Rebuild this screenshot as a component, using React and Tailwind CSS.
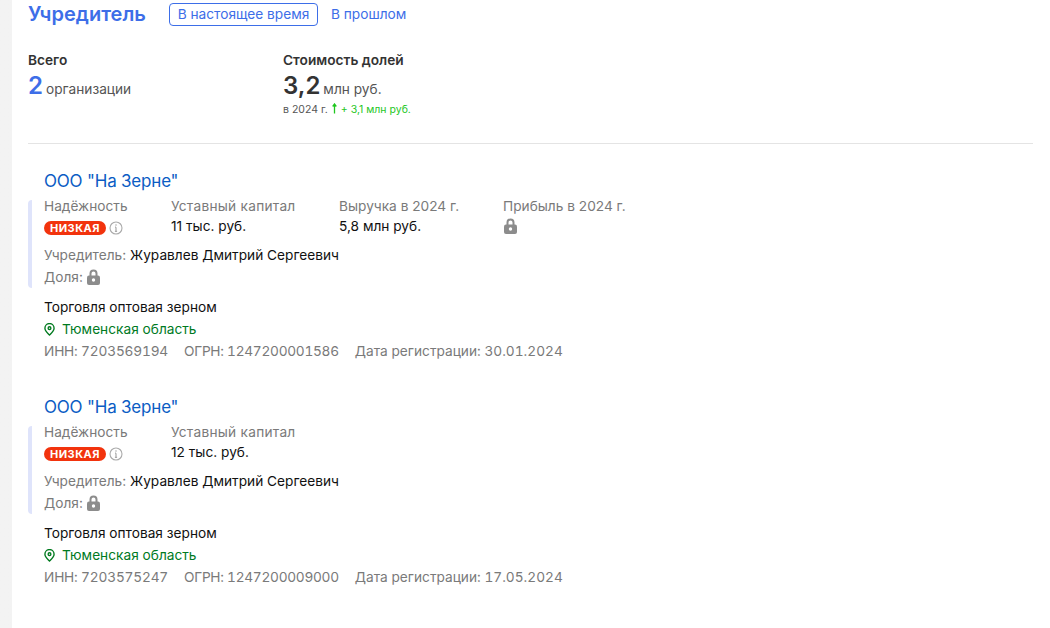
import React from "react";

const Lock = () => (
  <svg width="13" height="16" viewBox="0 0 13 16">
    <path d="M3.500 7V4.500a3 3 0 0 1 6 0V7" fill="none" stroke="#8c8c8c" strokeWidth="2" />
    <rect x="0" y="6.500" width="13" height="9.500" rx="2" fill="#8c8c8c" />
    <circle cx="6.500" cy="11" r="1.700" fill="#fff" />
  </svg>
);

const Info = () => (
  <svg width="14" height="14" viewBox="0 0 14 14" fill="none" stroke="#aaaaaa">
    <circle cx="7" cy="7" r="6" strokeWidth="1.100" />
    <path d="M7 6.200V10.200M5.900 10.300H8.100M6 6.200H7" strokeWidth="1.200" />
    <circle cx="7" cy="4" r="0.800" fill="#aaaaaa" stroke="none" />
  </svg>
);

const Pin = () => (
  <svg width="11" height="13" viewBox="0 0 12 14" fill="none" stroke="#007a1f" strokeWidth="1.500">
    <path d="M6 13C3.500 10.500 1 8.300 1 5.500A5 5 0 0 1 11 5.500C11 8.300 8.500 10.500 6 13Z" />
    <circle cx="6" cy="5.500" r="1.500" />
  </svg>
);

const UpArrow = () => (
  <svg width="5" height="11" viewBox="0 0 5 11" className="mx-[1px] inline-block align-[-1px]">
    <path d="M2.500 10.500V1.500M0.700 3.500L2.500 1L4.300 3.500" fill="none" stroke="#1fc71f" strokeWidth="1.300" />
  </svg>
);

const companies = [
  {
    capital: "11 тыс. руб.",
    revenue: true,
    inn: "7203569194",
    ogrn: "1247200001586",
    date: "30.01.2024",
  },
  {
    capital: "12 тыс. руб.",
    revenue: false,
    inn: "7203575247",
    ogrn: "1247200009000",
    date: "17.05.2024",
  },
];

const Company = ({ item }) => (
  <section className="pl-4">
    <h3 className="text-[17px] leading-[22px] tracking-[-0.2px] text-[#0b5cc4]">ООО "На Зерне"</h3>
    <div className="relative mt-[6px] h-[88px]">
      <div className="absolute -left-4 top-[2px] h-[88px] w-1 rounded-l bg-[#dfe4fb]" />
      <div className="flex">
        <div className="w-[127px]">
          <div className="leading-[16px] text-[#7a7a7a]">Надёжность</div>
          <div className="mt-[5px] flex h-[18px] items-center gap-[3px]">
            <span className="rounded-full bg-[#f2330d] px-[6px] text-[11px] leading-[14px] font-bold tracking-[0.5px] text-white">
              НИЗКАЯ
            </span>
            <Info />
          </div>
        </div>
        <div className="w-[168px]">
          <div className="leading-[16px] tracking-[0.25px] text-[#7a7a7a]">Уставный капитал</div>
          <div className="mt-[3px] leading-[18px] text-[#111111]">{item.capital}</div>
        </div>
        {item.revenue && (
          <>
            <div className="w-[164px]">
              <div className="leading-[16px] text-[#7a7a7a]">Выручка в 2024 г.</div>
              <div className="mt-[3px] leading-[18px] text-[#111111]">5,8 млн руб.</div>
            </div>
            <div>
              <div className="leading-[16px] text-[#7a7a7a]">Прибыль в 2024 г.</div>
              <div className="mt-[4px] pl-[1px]">
                <Lock />
              </div>
            </div>
          </>
        )}
      </div>
      <div className="mt-[9px] leading-[18px]">
        <span className="text-[#7a7a7a]">Учредитель: </span>
        <span className="text-[#111111]">Журавлев Дмитрий Сергеевич</span>
      </div>
      <div className="mt-1 flex h-[18px] items-center gap-1 text-[#7a7a7a]">
        Доля: <Lock />
      </div>
    </div>
    <div className="mt-[12px] leading-[18px] text-[#111111]">Торговля оптовая зерном</div>
    <div className="mt-[4px] flex h-[18px] items-center gap-[7px] text-[#007a1f]">
      <Pin />
      Тюменская область
    </div>
    <div className="mt-[4px] flex gap-4 leading-[18px] text-[#7a7a7a] tabular-nums">
      <span className="tracking-[-0.18px]">ИНН: {item.inn}</span>
      <span className="tracking-[-0.28px]">ОГРН: {item.ogrn}</span>
      <span>Дата регистрации: {item.date}</span>
    </div>
  </section>
);

export default function App() {
  return (
    <div className="h-[628px] overflow-hidden bg-linear-to-r from-[#f3f3f3] to-[#ebebeb] pl-3 font-['Inter','Liberation_Sans',sans-serif] text-[13.7px]">
      <main className="h-full bg-white pr-[17px] pl-4">
        <header className="flex items-center pt-[2px]">
          <h2 className="w-[141px] text-[20px] leading-[24px] font-semibold text-[#3d6ee8]">Учредитель</h2>
          <button className="h-[23px] w-[149px] rounded border border-[#3d6ee8] leading-[20px] text-[#3d6ee8]">
            В настоящее время
          </button>
          <button className="ml-[13px] leading-[20px] text-[#3d6ee8]">В прошлом</button>
        </header>

        <div className="mt-[25px] flex border-b border-[#e4e4e4] pb-[26px]">
          <div className="w-[255px]">
            <div className="leading-[18px] font-semibold text-[#333333]">Всего</div>
            <div className="mt-[3px] flex items-baseline gap-[3px]">
              <span className="text-[24px] leading-[28px] font-semibold text-[#3d6ee8]">2</span>
              <span className="text-[#555555]">организации</span>
            </div>
          </div>
          <div>
            <div className="leading-[18px] font-semibold text-[#333333]">Стоимость долей</div>
            <div className="mt-[3px] flex items-baseline gap-[3px]">
              <span className="text-[24px] leading-[28px] font-semibold text-[#333333]">3,2</span>
              <span className="text-[#555555]">млн руб.</span>
            </div>
            <div className="mt-[3px] text-[10.5px] leading-[14px] text-[#555555]">
              в 2024 г. <UpArrow /> <span className="text-[#1fc71f]">+ 3,1 млн руб.</span>
            </div>
          </div>
        </div>

        <div className="mt-[26px] flex flex-col gap-[36px]">
          {companies.map((item) => (
            <Company key={item.inn} item={item} />
          ))}
        </div>
      </main>
    </div>
  );
}
